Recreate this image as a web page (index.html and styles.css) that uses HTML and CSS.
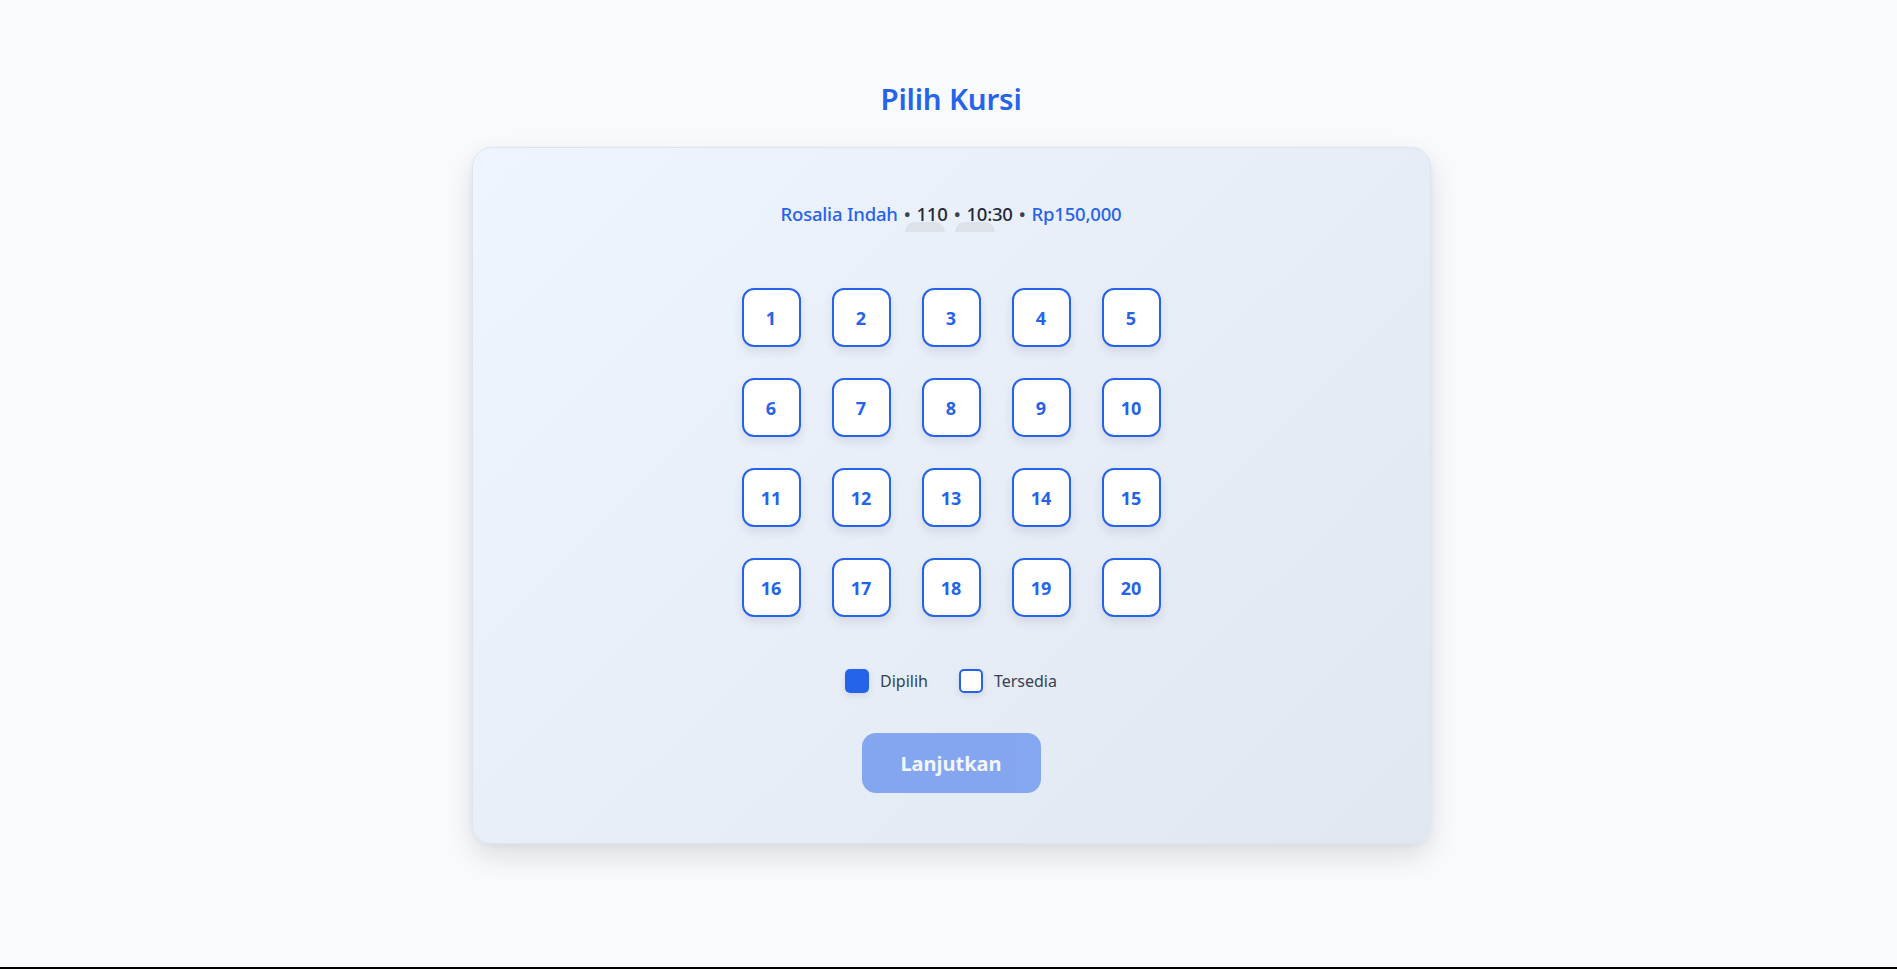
FILE: index.html
```html
<!DOCTYPE html>
<html lang="id">
<head>
<meta charset="utf-8">
<title>Pilih Kursi</title>
<link rel="stylesheet" href="styles.css">
</head>
<body>
<main class="page">
  <h1 class="title">Pilih Kursi</h1>
  <section class="card">
    <p class="info">
      <span class="accent">Rosalia Indah</span>
      <span class="dot">•</span>
      <span class="plain mark">110</span>
      <span class="dot">•</span>
      <span class="plain mark">10:30</span>
      <span class="dot">•</span>
      <span class="accent">Rp150,000</span>
    </p>
    <div class="seats">
      <button class="seat">1</button><button class="seat">2</button><button class="seat">3</button><button class="seat">4</button><button class="seat">5</button>
      <button class="seat">6</button><button class="seat">7</button><button class="seat">8</button><button class="seat">9</button><button class="seat">10</button>
      <button class="seat">11</button><button class="seat">12</button><button class="seat">13</button><button class="seat">14</button><button class="seat">15</button>
      <button class="seat">16</button><button class="seat">17</button><button class="seat">18</button><button class="seat">19</button><button class="seat">20</button>
    </div>
    <div class="legend">
      <div class="legend-item"><span class="swatch swatch-selected"></span><span>Dipilih</span></div>
      <div class="legend-item"><span class="swatch swatch-free"></span><span>Tersedia</span></div>
    </div>
    <button class="next" disabled>Lanjutkan</button>
  </section>
</main>
</body>
</html>
```

FILE: styles.css
```css
* { box-sizing: border-box; }

html, body {
  margin: 0;
  padding: 0;
}

body {
  min-height: 100vh;
  background: #f8fafc;
  font-family: "Noto Sans", "Open Sans", sans-serif;
  color: #1f2937;
  border-bottom: 2px solid #000;
}

.page {
  display: flex;
  flex-direction: column;
  align-items: center;
  padding: 79px 0 0 5px;
}

.title {
  margin: 0;
  height: 40px;
  line-height: 40px;
  font-size: 29.5px;
  font-weight: 600;
  color: #2563eb;
  letter-spacing: -0.2px;
}

.card {
  margin-top: 28px;
  width: 959px;
  padding: 52px 0 50px;
  border: 1px solid #dde4ee;
  border-radius: 20px;
  background: linear-gradient(135deg, #eff5fe 0%, #e8eef8 50%, #e1e7f0 100%);
  box-shadow: 0 12px 28px rgba(15, 23, 42, 0.12), 0 2px 6px rgba(15, 23, 42, 0.04);
  display: flex;
  flex-direction: column;
  align-items: center;
}

.info {
  margin: 0;
  height: 27px;
  line-height: 27px;
  font-size: 18.5px;
  font-weight: 500;
  display: flex;
  gap: 6px;
  letter-spacing: -0.2px;
}

.accent { color: #2563eb; }
.plain { color: #1f2937; }
.dot { color: #374151; }

.mark { position: relative; }
.mark::after {
  content: "";
  position: absolute;
  left: -11px;
  top: 22px;
  width: 40px;
  height: 10px;
  border-radius: 10px 10px 0 0;
  background: rgba(209, 213, 219, 0.55);
}

.seats {
  margin-top: 61px;
  display: grid;
  grid-template-columns: repeat(5, 59px);
  grid-auto-rows: 59px;
  gap: 31px;
}

.seat {
  width: 59px;
  height: 59px;
  padding: 0;
  border: 2px solid #2563eb;
  border-radius: 12px;
  background: #ffffff;
  color: #2563eb;
  font-family: inherit;
  font-size: 18px;
  font-weight: 700;
  box-shadow: 0 5px 10px rgba(30, 41, 59, 0.10);
  cursor: pointer;
}

.legend {
  margin-top: 52px;
  display: flex;
  gap: 31px;
  font-size: 16px;
  color: #374151;
}

.legend-item {
  display: flex;
  align-items: center;
  gap: 11px;
  height: 24px;
}

.swatch {
  width: 24px;
  height: 24px;
  border-radius: 5px;
  box-shadow: 0 3px 6px rgba(30, 41, 59, 0.10);
}

.swatch-selected { background: #2563eb; }
.swatch-free { background: #ffffff; border: 2px solid #2563eb; }

.next {
  margin-top: 40px;
  width: 179px;
  height: 60px;
  border: 0;
  border-radius: 14px;
  background: #2563eb;
  opacity: 0.5;
  color: #ffffff;
  font-family: inherit;
  font-size: 20px;
  font-weight: 700;
}
```
